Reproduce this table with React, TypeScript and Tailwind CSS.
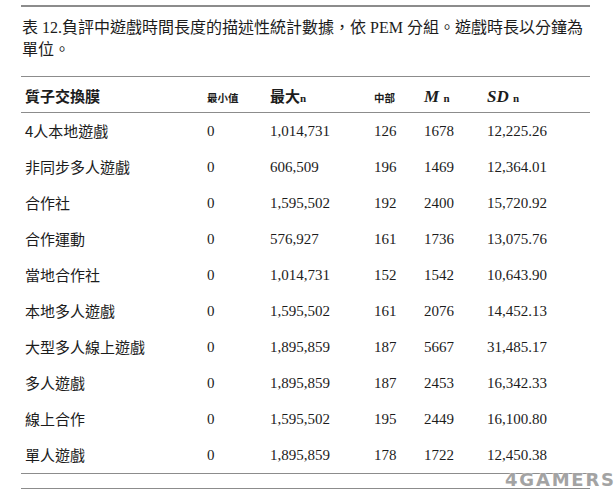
import React from 'react';

const rows = [
  ['4人本地遊戲', '0', '1,014,731', '126', '1678', '12,225.26'],
  ['非同步多人遊戲', '0', '606,509', '196', '1469', '12,364.01'],
  ['合作社', '0', '1,595,502', '192', '2400', '15,720.92'],
  ['合作運動', '0', '576,927', '161', '1736', '13,075.76'],
  ['當地合作社', '0', '1,014,731', '152', '1542', '10,643.90'],
  ['本地多人遊戲', '0', '1,595,502', '161', '2076', '14,452.13'],
  ['大型多人線上遊戲', '0', '1,895,859', '187', '5667', '31,485.17'],
  ['多人遊戲', '0', '1,895,859', '187', '2453', '16,342.33'],
  ['線上合作', '0', '1,595,502', '195', '2449', '16,100.80'],
  ['單人遊戲', '0', '1,895,859', '178', '1722', '12,450.38'],
];

const cjk = "font-['Noto_Sans_CJK_TC','Noto_Sans',sans-serif]";
const num = "font-['Liberation_Serif','Noto_Sans_CJK_TC',serif]";
const cols = 'grid grid-cols-[186px_63px_104px_50px_63px_1fr]';

const App: React.FC = () => {
  return (
    <div className="relative w-[616px] h-[492px] bg-white text-[#1c1c1c] overflow-hidden">
      <div className="ml-[21px] w-[569px] pt-[5px]">
        {/* 標題 */}
        <div className="border-t-2 border-[#8c8c8c] pt-[9px]">
          <p className={`${num} text-[16px] leading-[20px] pl-[1px] w-[575px]`}>
            <span className={cjk}>表</span> 12.
            <span className={cjk}>負評中遊戲時間長度的描述性統計數據，依</span> PEM{' '}
            <span className={cjk}>分組。遊戲時長以分鐘為單位。</span>
          </p>
        </div>

        {/* 表頭 */}
        <div className={`${cols} items-baseline mt-[16px] h-[37px] border-t-[1.5px] border-b-[1.5px] border-[#8c8c8c] pt-[7px]`}>
          <div className={`${cjk} text-[15px] font-bold pl-[4px]`}>質子交換膜</div>
          <div className={`${cjk} text-[10.5px] font-bold pt-[4px]`}>最小值</div>
          <div className={`${cjk} text-[15px] font-bold`}>
            最大<span className={`${num} text-[11px]`}>n</span>
          </div>
          <div className={`${cjk} text-[10.5px] font-bold`}>中部</div>
          <div className={`${num} text-[17px] font-bold`}>
            <i>M</i> <span className="text-[11px]">n</span>
          </div>
          <div className={`${num} text-[17px] font-bold`}>
            <i>SD</i> <span className="text-[11px]">n</span>
          </div>
        </div>

        {/* 資料列 */}
        {rows.map((r) => (
          <div key={r[0]} className={`${cols} items-center h-[36px]`}>
            <div className={`${cjk} text-[15px] pl-[4px]`}>{r[0]}</div>
            {r.slice(1).map((v, i) => (
              <div key={i} className={`${num} text-[15px]`}>{v}</div>
            ))}
          </div>
        ))}

        <div className="border-t-[1.5px] border-[#8c8c8c] h-[15px]" />
        <div className="border-t-[1.5px] border-[#8c8c8c]" />
      </div>

      {/* 浮水印 */}
      <div className="absolute left-[505px] top-[471px] font-['DejaVu_Sans',sans-serif] font-bold text-[18px] leading-none tracking-[1.8px] text-[#a3a3a3] [text-shadow:0_0_1px_#fff,0_0_2px_#fff]">
        4GAMERS
      </div>
    </div>
  );
};

export default App;
